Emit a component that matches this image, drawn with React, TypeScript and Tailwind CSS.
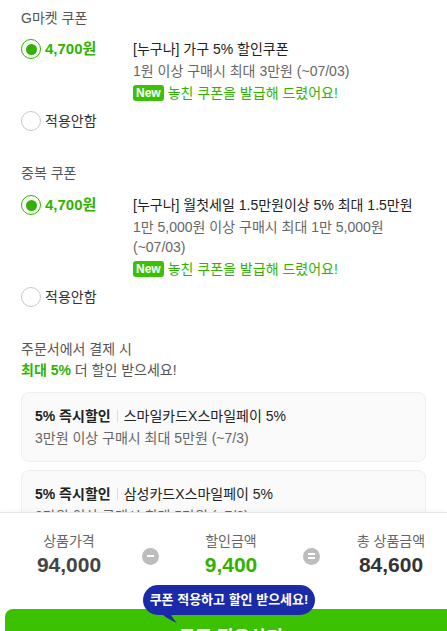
import React from "react";

const F = { fontFamily: '"Liberation Sans", "Noto Sans CJK KR", sans-serif' };

function Radio({ checked }: { checked: boolean }) {
  return checked ? (
    <span className="flex h-[20px] w-[20px] shrink-0 items-center justify-center rounded-full border-[1.5px] border-[#2fb300] bg-white">
      <span className="h-[11px] w-[11px] rounded-full bg-[#2fb300]" />
    </span>
  ) : (
    <span className="h-[20px] w-[20px] shrink-0 rounded-full border border-[#c8c8c8] bg-white" />
  );
}

function NewLine() {
  return (
    <div className="mt-[1px] flex h-[22px] items-center gap-[4px]">
      <span className="rounded-[3px] bg-[#3cc100] px-[3px] text-[12px] font-bold leading-[16px] text-white">New</span>
      <span className="text-[14px] text-[#2fb300]">놓친 쿠폰을 발급해 드렸어요!</span>
    </div>
  );
}

function CouponRow({ title, desc }: { title: string; desc: string[] }) {
  return (
    <div className="flex">
      <div className="flex h-[22px] w-[112px] shrink-0 items-center gap-[4px]">
        <Radio checked />
        <span className="text-[15px] font-bold text-[#2fb300]">4,700원</span>
      </div>
      <div className="flex flex-col">
        <div className="text-[14px] leading-[22px] text-[#222]">{title}</div>
        <div className="mt-[1px] text-[14px] leading-[20px] text-[#666]">
          {desc.map((d, i) => (
            <div key={i}>{d}</div>
          ))}
        </div>
        <NewLine />
      </div>
    </div>
  );
}

function NoApply() {
  return (
    <div className="mt-[6px] flex h-[22px] items-center gap-[4px]">
      <Radio checked={false} />
      <span className="text-[14px] text-[#333]">적용안함</span>
    </div>
  );
}

function Card({ card, sub }: { card: string; sub: string }) {
  return (
    <div className="rounded-[8px] border border-[#eeeeee] bg-[#fafafa] px-[13px] pb-[12px] pt-[12px]">
      <div className="flex items-center text-[14px] leading-[22px] text-[#222]">
        <span className="font-bold">5% 즉시할인</span>
        <span className="mx-[6px] h-[12px] w-px bg-[#ddd]" />
        <span>{card}</span>
      </div>
      <div className="text-[14px] leading-[22px] text-[#666]">{sub}</div>
    </div>
  );
}

export default function App() {
  return (
    <div style={F} className="relative h-[631px] w-[447px] overflow-hidden bg-white">
      <div className="px-[21px] pt-[7px]">
        <div className="text-[14px] leading-[22px] text-[#555]">G마켓 쿠폰</div>
        <div className="mt-[9px]">
          <CouponRow title="[누구나] 가구 5% 할인쿠폰" desc={["1원 이상 구매시 최대 3만원 (~07/03)"]} />
        </div>
        <NoApply />

        <div className="mt-[30px] text-[14px] leading-[22px] text-[#555]">중복 쿠폰</div>
        <div className="mt-[10px]">
          <CouponRow
            title="[누구나] 월첫세일 1.5만원이상 5% 최대 1.5만원"
            desc={["1만 5,000원 이상 구매시 최대 1만 5,000원", "(~07/03)"]}
          />
        </div>
        <NoApply />

        <div className="mt-[31px] text-[14px] leading-[21px] text-[#555]">
          <div>주문서에서 결제 시</div>
          <div>
            <span className="font-bold text-[#2fb300]">최대 5%</span> 더 할인 받으세요!
          </div>
        </div>

        <div className="mt-[11px] flex flex-col gap-[8px]">
          <Card card="스마일카드X스마일페이 5%" sub="3만원 이상 구매시 최대 5만원 (~7/3)" />
          <Card card="삼성카드X스마일페이 5%" sub="3만원 이상 구매시 최대 5만원 (~7/3)" />
        </div>
      </div>

      <div className="absolute bottom-0 left-0 right-0 top-[512px] overflow-hidden border-t border-[#e6e6e6] bg-white shadow-[0_-2px_4px_rgba(0,0,0,0.03)]">
        <div className="mt-[17px] grid grid-cols-[110px_52px_110px_50px_110px] pl-[14px]">
          <div className="flex flex-col items-center">
            <div className="text-[14px] leading-[22px] text-[#666]">상품가격</div>
            <div className="text-[21px] font-bold leading-[26px] text-[#444]">94,000</div>
          </div>
          <div className="flex items-center justify-center pt-[4px]">
            <span className="flex h-[17px] w-[17px] items-center justify-center rounded-full bg-[#bdbdbd]">
              <span className="h-[2px] w-[7px] bg-white" />
            </span>
          </div>
          <div className="flex flex-col items-center">
            <div className="text-[14px] leading-[22px] text-[#666]">할인금액</div>
            <div className="text-[21px] font-bold leading-[26px] text-[#2fb300]">9,400</div>
          </div>
          <div className="flex items-center justify-center pt-[4px]">
            <span className="flex h-[17px] w-[17px] flex-col items-center justify-center gap-[2px] rounded-full bg-[#bdbdbd]">
              <span className="h-[2px] w-[7px] bg-white" />
              <span className="h-[2px] w-[7px] bg-white" />
            </span>
          </div>
          <div className="flex flex-col items-center">
            <div className="text-[14px] leading-[22px] text-[#666]">총 상품금액</div>
            <div className="text-[21px] font-bold leading-[26px] text-[#333]">84,600</div>
          </div>
        </div>

        <div className="relative mt-[31px]">
          <div className="ml-[5px] -mr-[10px] flex h-[56px] items-center justify-center rounded-t-[8px] bg-[#3cc100] pt-[2px]">
            <span className="text-[18px] font-bold text-white">쿠폰 적용하기</span>
          </div>
          <div className="absolute left-[143px] top-[-24px] z-10">
            <div className="relative flex h-[30px] w-[172px] items-center justify-center rounded-full bg-[#1a2aa8]">
              <span className="text-[13px] font-bold text-white">쿠폰 적용하고 할인 받으세요!</span>
              <svg className="absolute left-[14px] top-[24px]" width="22" height="14" viewBox="0 0 22 14">
                <path d="M0 0 Q6 8 20 14 Q12 6 14 0 Z" fill="#1a2aa8" />
              </svg>
            </div>
          </div>
        </div>
      </div>
    </div>
  );
}
